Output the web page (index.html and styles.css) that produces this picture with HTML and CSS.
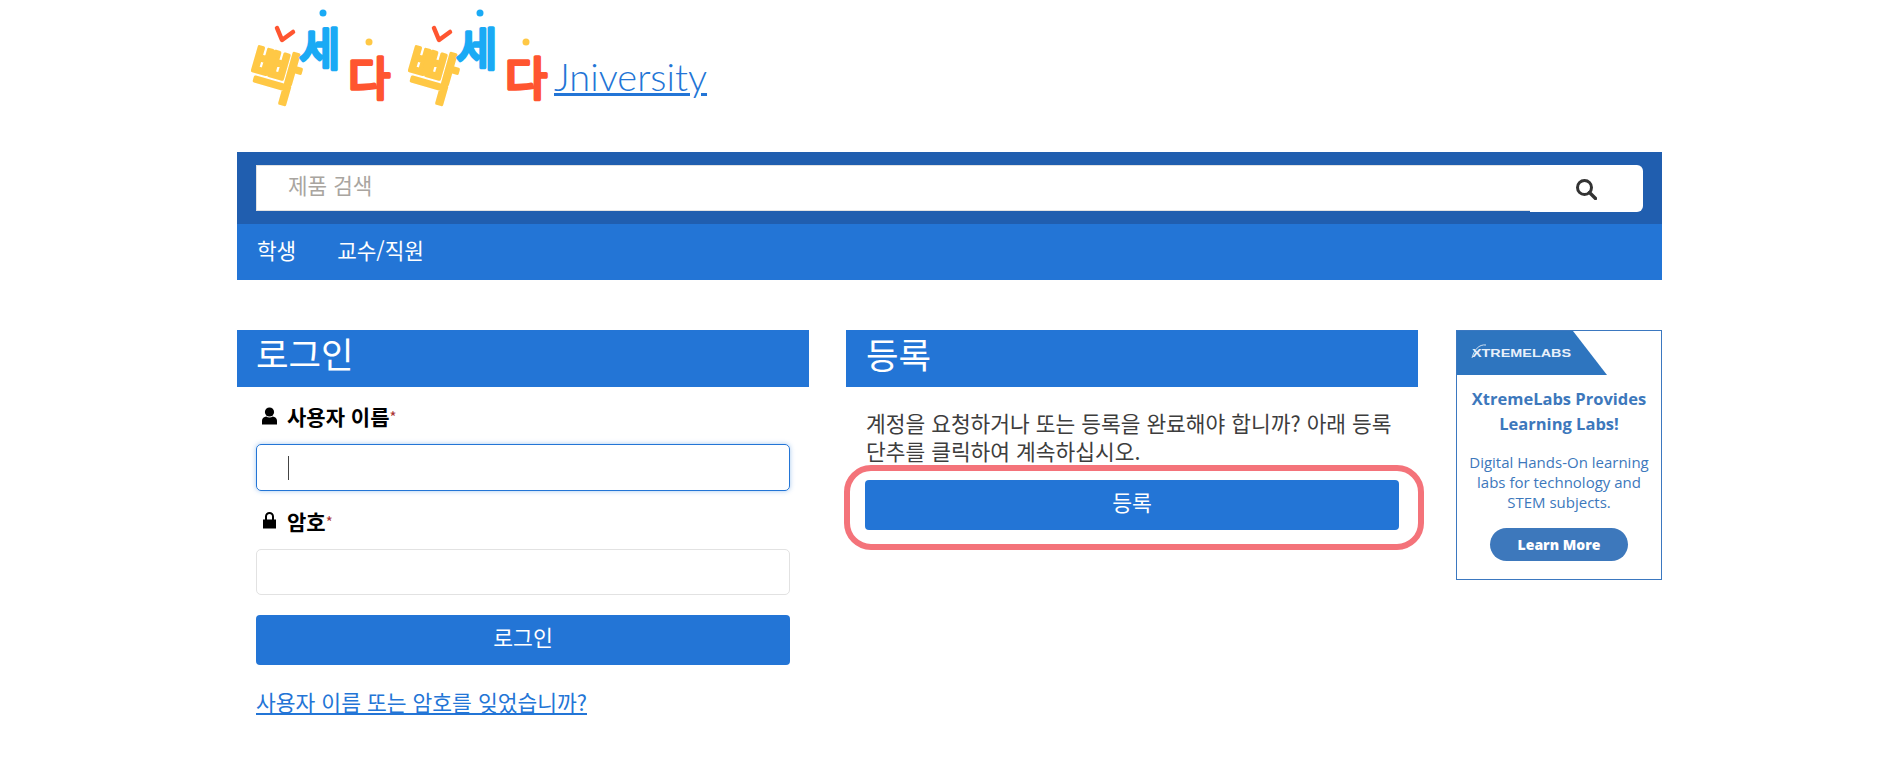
FILE: index.html
```html
<!DOCTYPE html>
<html lang="ko">
<head>
    <meta charset="UTF-8">
    <title>로그인</title>
    <link rel="stylesheet" href="styles.css">
</head>
<body>
    <div class="container">
        <header class="logo-row">
            <svg class="logo" width="317" height="118" viewBox="0 0 317 118" aria-label="빡세다 빡세다">
                <g>
                    <text class="logo-yellow" text-anchor="middle" transform="translate(37 76) rotate(16) translate(0 20)">빡</text>
                    <path class="logo-check" d="M40 28l5 12 11-8"/>
                    <text class="logo-blue" transform="translate(62 66)">세</text>
                    <circle cx="86" cy="13" r="3.500" fill="#1aaaf5"/>
                    <text class="logo-red" transform="translate(111 95)">다</text>
                    <circle cx="132" cy="42" r="3.500" fill="#ffc845"/>
                </g>
                <g transform="translate(157 0)">
                    <text class="logo-yellow" text-anchor="middle" transform="translate(37 76) rotate(16) translate(0 20)">빡</text>
                    <path class="logo-check" d="M40 28l5 12 11-8"/>
                    <text class="logo-blue" transform="translate(62 66)">세</text>
                    <circle cx="86" cy="13" r="3.500" fill="#1aaaf5"/>
                    <text class="logo-red" transform="translate(111 95)">다</text>
                    <circle cx="132" cy="42" r="3.500" fill="#ffc845"/>
                </g>
            </svg>
            <a class="logo-link" href="#">Jniversity</a>
        </header>

        <nav class="nav">
            <div class="search-bar">
                <input class="search-input" type="text" placeholder="제품 검색">
                <button class="search-btn" type="button" aria-label="검색">
                    <svg width="22" height="22" viewBox="0 0 22 22"><circle cx="9.500" cy="9.500" r="7" fill="none" stroke="#333" stroke-width="3"/><path d="M14.500 14.500l6 6" stroke="#333" stroke-width="3.400" stroke-linecap="round"/></svg>
                </button>
            </div>
            <div class="nav-links">
                <a href="#">학생</a>
                <a href="#">교수/직원</a>
            </div>
        </nav>

        <main class="columns">
            <section class="panel">
                <h2 class="panel-title">로그인</h2>
                <form class="login-form">
                    <label class="field-label">
                        <svg class="field-icon" width="15" height="18" viewBox="0 0 15 18"><circle cx="7.500" cy="5" r="4.600"/><path d="M0 17.500v-3.800c0-2.500 2-3.700 4.200-4.200 1.800 1.200 4.800 1.200 6.600 0 2.200.5 4.200 1.700 4.200 4.200v3.800z"/></svg>
                        사용자 이름<span class="req">*</span>
                    </label>
                    <div class="input focused"><span class="caret"></span></div>
                    <label class="field-label second">
                        <svg class="field-icon" width="15" height="18" viewBox="0 0 15 18"><path d="M1 17.500v-9h2v-3a4.500 4.500 0 0 1 9 0v3h2v9zM5 8.500h5v-3a2.500 2.500 0 0 0-5 0z" transform="translate(0 -1)"/></svg>
                        암호<span class="req">*</span>
                    </label>
                    <div class="input"></div>
                    <button class="btn login-btn" type="button">로그인</button>
                    <a class="forgot" href="#">사용자 이름 또는 암호를 잊었습니까?</a>
                </form>
            </section>

            <section class="panel">
                <h2 class="panel-title register-title">등록</h2>
                <p class="register-text">계정을 요청하거나 또는 등록을 완료해야 합니까? 아래 등록 단추를 클릭하여 계속하십시오.</p>
                <div class="highlight">
                    <button class="btn" type="button">등록</button>
                </div>
            </section>

            <aside class="ad">
                <div class="ad-banner">
                    <svg width="150" height="44" viewBox="0 0 150 44"><polygon points="0,0 116,0 150,44 0,44" fill="#2e75bf"/><text class="ad-logo" x="15" y="26" textLength="99" lengthAdjust="spacingAndGlyphs">XTREMELABS</text><path d="M15 27c2-8 7-14 14-13" fill="none" stroke="#cfe0f2" stroke-width="1"/></svg>
                </div>
                <h3 class="ad-title">XtremeLabs Provides Learning Labs!</h3>
                <p class="ad-text">Digital Hands-On learning labs for technology and STEM subjects.</p>
                <a class="ad-btn" href="#">Learn More</a>
            </aside>
        </main>
    </div>
</body>
</html>
```

FILE: styles.css
```css
body {
    margin: 0;
    background: #fff;
    color: #333;
    font-family: "Noto Sans CJK KR", "Noto Sans", sans-serif;
    overflow: hidden;
}
.container {
    width: 1425px;
    margin-left: 237px;
}
.logo-row {
    display: flex;
    align-items: flex-start;
    height: 152px;
}
.logo text {
    font-family: "Noto Sans CJK KR", sans-serif;
    font-weight: 400;
    stroke-linejoin: round;
    stroke-linecap: round;
    stroke-width: 3.500px;
}
.logo-yellow {
    font-size: 57px;
    fill: #ffc845;
    stroke: #ffc845;
}
.logo-blue {
    font-size: 45px;
    fill: #1aaaf5;
    stroke: #1aaaf5;
}
.logo-red {
    font-size: 46px;
    fill: #ff5530;
    stroke: #ff5530;
}
.logo-check {
    fill: none;
    stroke: #ff5530;
    stroke-width: 4.500px;
    stroke-linecap: round;
    stroke-linejoin: round;
}
.logo-link {
    margin-top: 53px;
    font-family: Lato, sans-serif;
    font-weight: 300;
    font-size: 38px;
    line-height: 46px;
    color: #2375d6;
}
.nav {
    background: #2375d6;
}
.search-bar {
    display: flex;
    height: 72px;
    box-sizing: border-box;
    padding: 13px 19px 12px;
    background: #205eaf;
}
.search-input {
    flex: 1;
    min-width: 0;
    height: 46px;
    box-sizing: border-box;
    padding: 0 0 8px 31px;
    border: 1px solid #e2e2e2;
    border-right: 0;
    background: #fff;
    font: 21.300px "Noto Sans CJK KR", sans-serif;
}
.search-input::placeholder {
    color: #a9a5a0;
}
.search-btn {
    width: 113px;
    height: 47px;
    padding: 0;
    border: 0;
    border-radius: 0 6px 6px 0;
    background: #fff;
}
.search-btn svg {
    display: block;
    margin: 0 auto;
    position: relative;
    left: -1px;
}
.nav-links {
    display: flex;
    gap: 41px;
    height: 56px;
    padding: 0 0 5px 20px;
    box-sizing: border-box;
    align-items: center;
}
.nav-links a {
    color: #fff;
    font-size: 21.300px;
    text-decoration: none;
}
.columns {
    display: flex;
    align-items: flex-start;
    margin-top: 50px;
}
.panel {
    width: 572px;
    margin-right: 37px;
}
.panel-title {
    height: 57px;
    margin: 0;
    padding-left: 19px;
    background: #2375d6;
    color: #fff;
    font-size: 35.400px;
    font-weight: 400;
    line-height: 46px;
}
.register-title {
    padding-left: 20px;
    line-height: 48px;
}
.login-form {
    display: flex;
    flex-direction: column;
    padding: 15px 19px 0;
}
.field-label {
    display: flex;
    align-items: center;
    height: 28px;
    padding-left: 6px;
    color: #000;
    font-size: 21px;
    font-weight: 700;
}
.field-label.second {
    margin-top: 16px;
}
.field-icon {
    margin-right: 10px;
    fill: #000;
}
.req {
    align-self: flex-start;
    color: #a33;
    font-size: 15px;
    font-weight: 400;
    line-height: 30px;
}
.input {
    display: flex;
    align-items: center;
    height: 46px;
    box-sizing: border-box;
    margin-top: 14px;
    padding-left: 31px;
    border: 1px solid #e2e2e2;
    border-radius: 5px;
}
.input.focused {
    height: 47px;
    margin-top: 14px;
    border-color: #2375d6;
    box-shadow: 0 0 5px rgba(35, 117, 214, 0.4);
}
.caret {
    width: 1px;
    height: 24px;
    background: #444;
}
.btn {
    display: block;
    width: 100%;
    height: 50px;
    padding: 0 0 8px;
    border: 0;
    border-radius: 4px;
    background: #2375d6;
    color: #fff;
    font: 21.600px "Noto Sans CJK KR", sans-serif;
}
.login-btn {
    margin-top: 20px;
}
.forgot {
    align-self: flex-start;
    margin-top: 22px;
    color: #2375d6;
    font-size: 21.500px;
    line-height: 30px;
}
.register-text {
    margin: 22px 19px 0 20px;
    color: #3d3d3d;
    font-size: 21.450px;
    line-height: 28px;
}
.highlight {
    box-sizing: border-box;
    width: 580px;
    height: 85px;
    margin: 0 0 0 -2px;
    padding: 9px 15px;
    border: 6px solid #f4737a;
    border-radius: 27px;
    background: #fff;
}
.highlight .btn {
    width: 534px;
}
.ad {
    box-sizing: border-box;
    width: 206px;
    height: 250px;
    border: 1px solid #3b78c0;
    text-align: center;
    margin-left: 1px;
}
.ad-banner {
    height: 44px;
    text-align: left;
}
.ad-banner svg {
    display: block;
}
.ad-logo {
    font-family: "Liberation Sans", sans-serif;
    font-size: 11px;
    font-weight: 700;
    fill: #e8f0fa;
}
.ad-title {
    margin: 11px 0 0;
    padding: 0 10px;
    color: #3d78bc;
    font-family: "Open Sans", sans-serif;
    font-size: 16.500px;
    font-weight: 700;
    line-height: 25px;
}
.ad-text {
    margin: 16px 0 0;
    padding: 0 8px;
    color: #3d78bc;
    font-family: "Open Sans", sans-serif;
    font-size: 15px;
    line-height: 20px;
}
.ad-btn {
    display: block;
    width: 138px;
    height: 33px;
    margin: 16px auto 0;
    border-radius: 17px;
    background: #3d78bc;
    color: #fff;
    font-family: "Open Sans", sans-serif;
    font-size: 14px;
    font-weight: 800;
    line-height: 33px;
    text-decoration: none;
}
```
